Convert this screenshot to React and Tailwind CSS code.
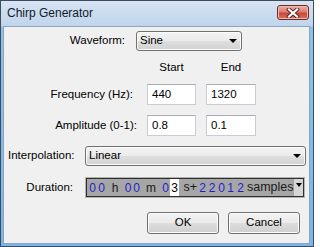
import React from 'react';

const Arrow = () => (
    <span className="block w-0 h-0 border-l-[4px] border-r-[4px] border-t-[4px] border-l-transparent border-r-transparent border-t-black"></span>
);

const Combo = ({ value, className }) => (
    <div className={`flex items-center justify-between h-[20px] pl-[3px] pr-[4px] border border-[#707070] rounded-[3px] bg-[linear-gradient(to_bottom,#f3f3f3_0%,#ebebeb_48%,#dedede_52%,#d2d2d2_100%)] shadow-[inset_0_0_0_1px_#fbfbfb] ${className}`}>
        <span>{value}</span>
        <Arrow />
    </div>
);

const Field = ({ value, className }) => (
    <div className={`flex items-center h-[21px] pl-[4px] bg-white border border-[#c9ccd3] border-t-[#abadb3] ${className}`}>
        {value}
    </div>
);

const Button = ({ label, className }) => (
    <button className={`w-[72px] h-[22px] flex items-center justify-center border border-[#707070] rounded-[3px] bg-[linear-gradient(to_bottom,#f2f2f2_0%,#ebebeb_48%,#dddddd_52%,#cfcfcf_100%)] shadow-[inset_0_0_0_1px_#fcfcfc] ${className}`}>
        {label}
    </button>
);

// one character of the duration control, in its own fixed cell
const Cell = ({ ch, w, digit, selected }) => (
    <span
        className={`flex items-center justify-center h-full ${w} ${digit ? 'text-[#1e1ecc]' : 'text-[#1a1a1a]'} ${selected ? 'bg-white text-black' : ''}`}
    >
        {ch}
    </span>
);

const Duration = () => (
    <div className="w-[220px] h-[21px] border border-[#b4b4b4]">
        <div className="flex items-stretch h-full border border-[#2e2e2e] bg-[#a6a6a6] text-[12px] leading-none overflow-hidden">
            <span className="w-[1px]"></span>
            <Cell ch="0" w="w-[9px]" digit />
            <Cell ch="0" w="w-[9px]" digit />
            <Cell ch="h" w="w-[18px]" />
            <Cell ch="0" w="w-[8px]" digit />
            <Cell ch="0" w="w-[9px]" digit />
            <Cell ch="m" w="w-[20px]" />
            <Cell ch="0" w="w-[9px]" digit />
            <Cell ch="3" w="w-[9px]" digit selected />
            <span className="flex items-center justify-end pr-[1px] w-[19px] text-[12.5px] text-[#1a1a1a]">s+</span>
            <Cell ch="2" w="w-[9px]" digit />
            <Cell ch="2" w="w-[10px]" digit />
            <Cell ch="0" w="w-[9px]" digit />
            <Cell ch="1" w="w-[9px]" digit />
            <Cell ch="2" w="w-[11px]" digit />
            <span className="flex-1 flex items-center pl-[1px] text-[12.5px] text-[#1a1a1a] overflow-hidden whitespace-nowrap">samples</span>
            <span className="w-[9px] flex justify-center pt-[4px] bg-[#d6d6d6]">
                <span className="block w-0 h-0 border-l-[3.5px] border-r-[3.5px] border-t-[4px] border-l-transparent border-r-transparent border-t-black"></span>
            </span>
        </div>
    </div>
);

export default function App() {
    return (
        <div className="w-[314px] h-[247px] flex flex-col border border-[#3d4b5c] pl-[2px] pr-[3px] pb-[2px] bg-[linear-gradient(to_bottom,#d7e4f4_0px,#bfd4ec_25px,#8cc2ec_26px,#76b8ea_100%)] font-['Liberation_Sans',Arial,sans-serif] text-[11.5px] text-black select-none">
            {/* title bar */}
            <div className="h-[25px] flex items-start justify-between">
                <span className="pl-[4px] pt-[6px] text-[12px] leading-none text-[#111a26]">Chirp Generator</span>
                <div className="mt-[4px] mr-[1px] w-[32px] h-[15px] flex items-center justify-center rounded-[3px] border border-[#6e2a24] bg-[linear-gradient(to_bottom,#eab0a6_0%,#dc7d70_45%,#c8483a_55%,#d8745f_100%)] shadow-[inset_0_0_0_1px_#f0b9ae]">
                    <svg width="14" height="10" viewBox="0 0 14 10">
                        <path d="M3 1.5 L11 8.5 M11 1.5 L3 8.5" stroke="#5a2420" strokeWidth="4" strokeLinecap="square" />
                        <path d="M3 1.5 L11 8.5 M11 1.5 L3 8.5" stroke="#ffffff" strokeWidth="2.2" strokeLinecap="square" />
                    </svg>
                </div>
            </div>

            {/* client area */}
            <div className="flex-1 flex flex-col border border-[#8ea3bc] bg-[#f0f0f0]">
                <div className="flex items-center mt-[4px]">
                    <span className="w-[121px] text-right">Waveform:</span>
                    <Combo value="Sine" className="ml-[11px] w-[106px]" />
                </div>

                <div className="flex items-center h-[14px] mt-[10px]">
                    <span className="ml-[143px] w-[49px] text-center">Start</span>
                    <span className="ml-[10px] w-[50px] text-center">End</span>
                </div>

                <div className="flex items-center mt-[9px]">
                    <span className="w-[129px] text-right">Frequency (Hz):</span>
                    <Field value="440" className="ml-[14px] w-[49px]" />
                    <Field value="1320" className="ml-[10px] w-[50px]" />
                </div>

                <div className="flex items-center mt-[10px]">
                    <span className="w-[133px] text-right">Amplitude (0-1):</span>
                    <Field value="0.8" className="ml-[10px] w-[49px]" />
                    <Field value="0.1" className="ml-[10px] w-[50px]" />
                </div>

                <div className="flex items-center mt-[10px]">
                    <span className="w-[81px] pl-[4px]">Interpolation:</span>
                    <Combo value="Linear" className="w-[221px]" />
                </div>

                <div className="flex items-center mt-[11px]">
                    <span className="w-[81px] pr-[12px] text-right">Duration:</span>
                    <Duration />
                </div>

                <div className="flex mt-[14px] ml-[143px] gap-[9px]">
                    <Button label="OK" />
                    <Button label="Cancel" />
                </div>
            </div>
        </div>
    );
}
